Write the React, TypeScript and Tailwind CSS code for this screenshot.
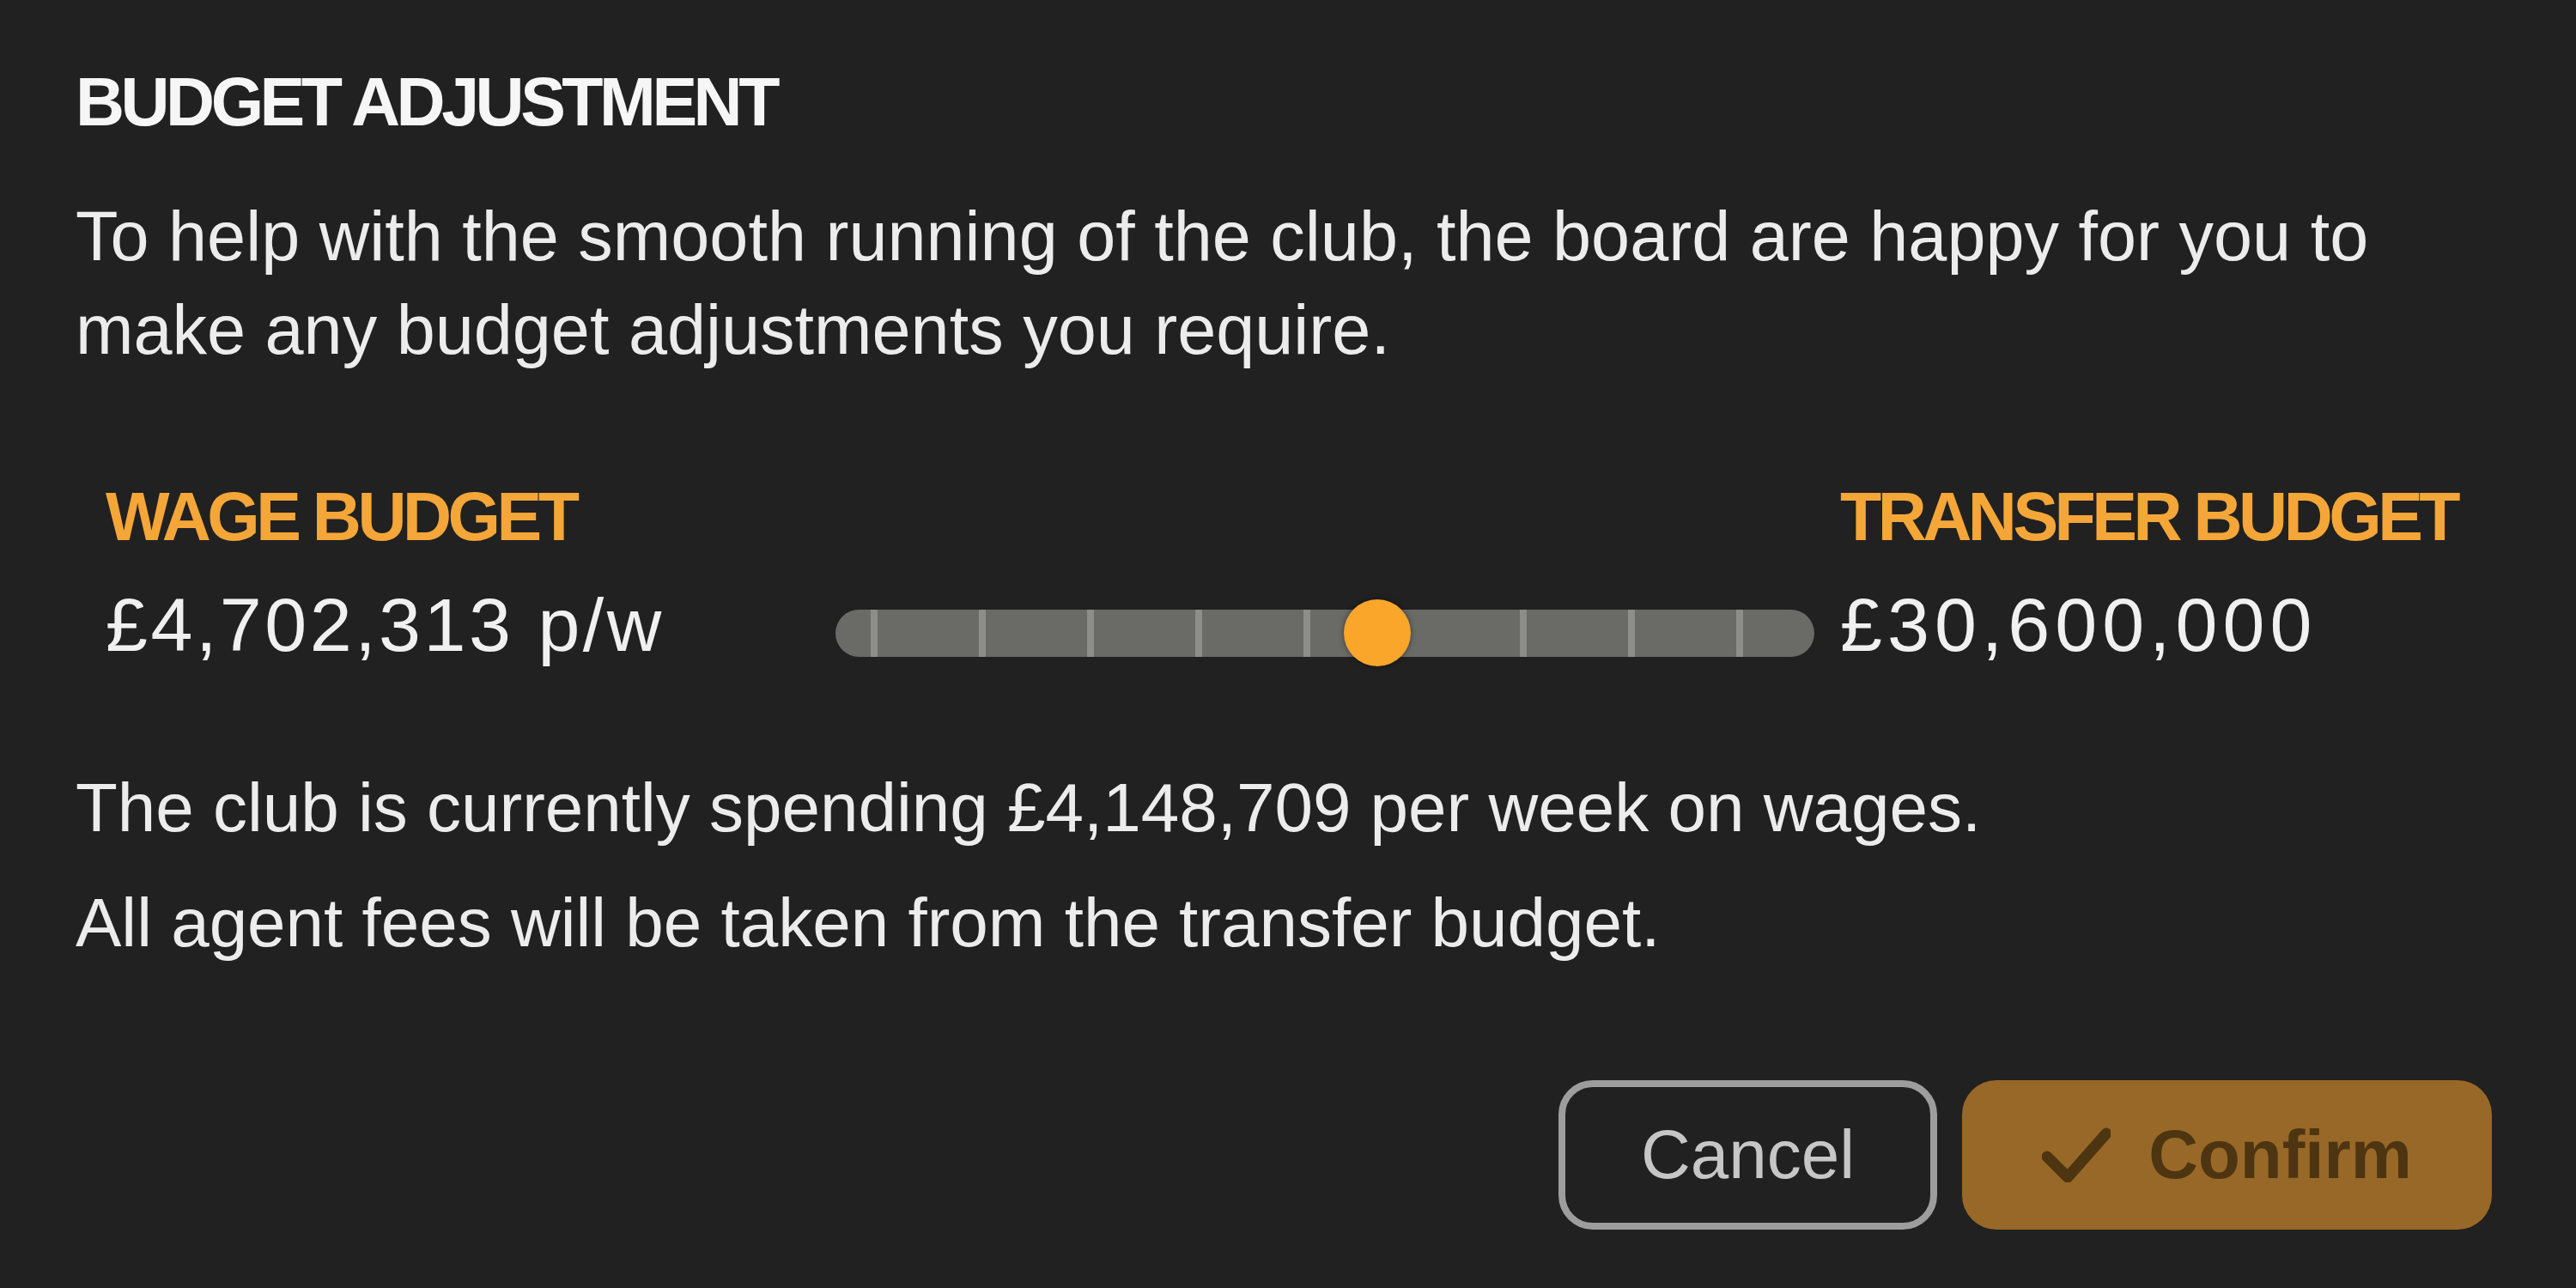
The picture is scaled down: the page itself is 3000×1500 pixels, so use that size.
import React from 'react';

// slider geometry, in px along the track
const TRACK_W   = 1140;
const TICK_GAP  = 126;
const TICK_X0   = 45;
const THUMB_AT  = 631;
const THUMB_D   = 78;

const TICKS = Array.from({ length: 9 }, (_, i) => TICK_X0 + i * TICK_GAP)
  .filter(x => Math.abs(x - THUMB_AT) > 50);

function BudgetSlider() {
  return (
    <div className="relative h-[80px] flex items-center mb-[-5px] flex-shrink-0" style={{ width: TRACK_W }}>
      <div className="relative w-full h-[55px] rounded-full bg-[#6a6a66] overflow-hidden">
        {TICKS.map(x => (
          <div
            key={x}
            className="absolute top-0 bottom-0 w-[8px] bg-[#8d8d89] blur-[0.5px]"
            style={{ left: x - 4 }}
          />
        ))}
      </div>
      <div
        className="absolute top-[1px] w-[78px] h-[78px] rounded-full bg-[#f9a62b] shadow-[0_0_6px_rgba(0,0,0,0.45)]"
        style={{ left: THUMB_AT - THUMB_D / 2 }}
      />
    </div>
  );
}

interface ColumnProps {
  label:  string;
  value:  string;
  unit?:  string;
  narrow?: boolean;
}

function BudgetColumn({ label, value, unit, narrow }: ColumnProps) {
  return (
    <div>
      <div className="text-[79px] leading-[80px] font-bold tracking-[-4.5px] text-[#f4a638] whitespace-nowrap">
        {label}
      </div>
      <div className={`mt-[42px] text-[88px] leading-[88px] text-[#f0f0f0] whitespace-nowrap ${narrow ? 'tracking-[3.5px]' : 'tracking-[6px]'}`}>
        {value}
        {unit && <span> {unit}</span>}
      </div>
    </div>
  );
}

export default function App() {
  return (
    <div className="w-[3000px] h-[1500px] overflow-hidden bg-[#212121] font-['Liberation_Sans',Arial,sans-serif] pl-[88px] pr-[98px] pt-[79px] flex flex-col">

      {/* Header */}
      <h1 className="text-[79px] leading-[80px] font-bold tracking-[-4.5px] text-[#f6f6f6]">
        BUDGET ADJUSTMENT
      </h1>
      <p className="mt-[62px] text-[81px] leading-[109px] text-[#ececec]">
        To help with the smooth running of the club, the board are happy for you to make any budget adjustments you require.
      </p>

      {/* Wage / transfer split */}
      <div className="mt-[123px] pl-[35px] flex items-end">
        <div className="w-[850px] flex-shrink-0">
          <BudgetColumn label="WAGE BUDGET" value="£4,702,313" unit="p/w" narrow />
        </div>
        <BudgetSlider />
        <div className="ml-[30px]">
          <BudgetColumn label="TRANSFER BUDGET" value="£30,600,000" />
        </div>
      </div>

      {/* Notes */}
      <p className="mt-[114px] text-[80px] leading-[109px] text-[#ececec]">
        The club is currently spending £4,148,709 per week on wages.
      </p>
      <p className="mt-[25px] text-[80px] leading-[109px] text-[#ececec]">
        All agent fees will be taken from the transfer budget.
      </p>

      {/* Actions */}
      <div className="mt-[129px] flex justify-end gap-[29px]">
        <button className="w-[441px] h-[174px] rounded-[40px] border-[8px] border-[#9d9d9d] text-[80px] leading-[80px] text-[#c6c6c6] flex items-center justify-center">
          Cancel
        </button>
        <button className="w-[617px] h-[174px] rounded-[40px] bg-[#986828] text-[80px] leading-[80px] font-bold text-[#4e3511] flex items-center justify-center gap-[44px]">
          <svg width="80" height="64" viewBox="0 0 80 64" fill="none">
            <polyline
              points="6,34 30,58 75,7"
              stroke="#4e3511"
              strokeWidth="13"
              strokeLinecap="round"
              strokeLinejoin="round"
            />
          </svg>
          Confirm
        </button>
      </div>
    </div>
  );
}
